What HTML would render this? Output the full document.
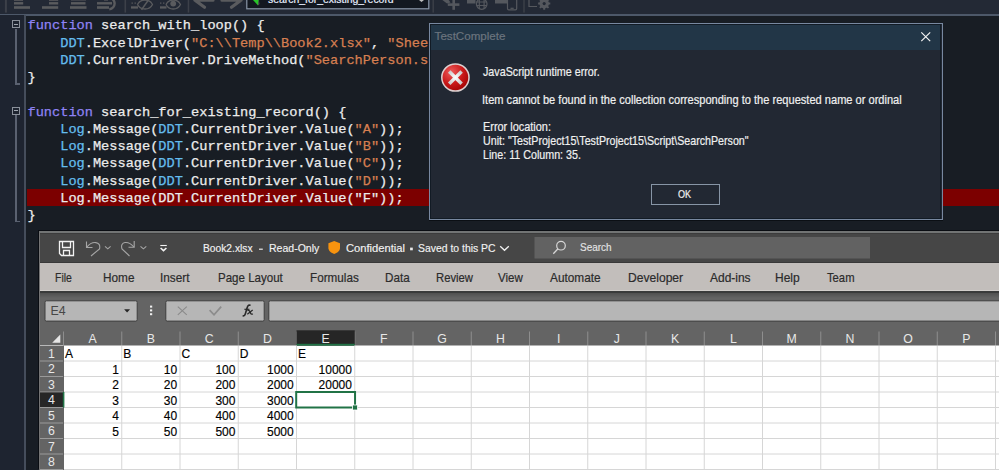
<!DOCTYPE html>
<html><head><meta charset="utf-8">
<style>
*{margin:0;padding:0;box-sizing:border-box}
html,body{width:999px;height:470px;overflow:hidden;background:#181d24;position:relative;font-family:"Liberation Sans",sans-serif}
.abs{position:absolute}
#tb{left:0;top:0;width:999px;height:14px;background:#232935}
#tbb{left:0;top:14px;width:999px;height:1.5px;background:#4d5869}
#gut{left:0;top:15px;width:24px;height:455px;background:#1e2430}
#gl{left:24px;top:15px;width:2px;height:455px;background:#454d5b}
.code{left:27.5px;font-family:"Liberation Mono",monospace;font-size:13.63px;line-height:17.27px;white-space:pre;color:#ececec;-webkit-text-stroke:0.25px currentColor}
.kw{color:#8f83f5}.ob{color:#64bdee}.st{color:#d67f51}
#red{left:27px;top:189px;width:972px;height:17px;background:#7c0000}

.fold{position:absolute;left:11.7px;width:8.3px;height:8px;border:1.3px solid #8a909a;}
.fold i{position:absolute;left:0.9px;top:2.4px;width:4px;height:1.4px;background:#a0a6b0}
.fv{position:absolute;left:15px;width:2px;background:#5a6170}
.fh{position:absolute;left:15px;width:5px;height:1.5px;background:#5a6170}
#dlg{left:429px;top:23px;width:514px;height:197.4px;border:1.4px solid #7888a0;background:#222833;box-shadow:0 1px 0 #0b0f14}
#dlgin{left:0;top:0;width:511.2px;height:194.6px;border:1px solid #121b25}
#dlgt{left:0;top:0;width:511.2px;height:25.6px;background:#223647}
.dt{font-family:"Liberation Sans",sans-serif;font-size:12.2px;line-height:14px;color:#f0f0f0;white-space:pre;position:absolute;transform-origin:0 0;-webkit-text-stroke:0.2px currentColor}
#okb{left:221px;top:160px;width:69px;height:21px;border:1.2px solid #8795a6}
#xl{left:39px;top:231px;width:960px;height:239px;background:#646464;border-top:2px solid #727474;border-left:1.3px solid #747474;box-shadow:-1px -1px 0 #0a0d12}
#xsh{left:39px;top:230px;width:960px;height:1px;background:#06090e}

#xtitle{left:40.2px;top:233px;width:959px;height:30px;background:#464646;border-top:1px solid #3c3c3c;border-bottom:1.2px solid #393939}
#xrib{left:40.2px;top:263px;width:959px;height:28px;background:#c2bebb;border-bottom:1.5px solid #d2cecb}
#xribl{left:40.2px;top:291px;width:959px;height:8px;background:linear-gradient(#3a3b3b 0,#3a3b3b 2px,#505050 2px,#646464 7px)}
.xt{position:absolute;font-size:11.6px;color:#f2f2f2;white-space:pre;transform-origin:0 0;-webkit-text-stroke:0.15px currentColor}
.tab{position:absolute;top:271px;font-size:12.4px;color:#2b2b2b;white-space:pre;transform-origin:0 0;-webkit-text-stroke:0.2px currentColor}

.ch{position:absolute;top:331.5px;width:40px;text-align:center;font-size:12.3px;color:#e8e8e8;line-height:14px}
.rh{position:absolute;left:40px;width:23px;text-align:center;font-size:12.3px;color:#e8e8e8;line-height:14px}
.cl,.cr{position:absolute;font-size:12px;color:#000;line-height:14px;white-space:pre;-webkit-text-stroke:0.15px currentColor}
.cr{text-align:right}
</style></head><body>
<div class="abs" id="tb"></div>
<div class="abs" id="tbb"></div>
<svg class="abs" style="left:0;top:0" width="999" height="15" viewBox="0 0 999 15">
<g fill="#5a5b5e">
<rect x="4.9" y="0" width="2" height="12.6" fill="#3c4049"/>
<rect x="14" y="-1" width="9" height="1.8"/><rect x="14" y="2.1" width="9.2" height="2.4"/><rect x="14" y="6.2" width="16" height="2.6"/>
<rect x="49" y="-1" width="9.2" height="1.8"/><rect x="49" y="2.1" width="9.2" height="2.4"/><rect x="42" y="6.2" width="16.2" height="2.6"/>
<rect x="71" y="-1" width="15" height="1.5"/><rect x="71" y="2.1" width="14.5" height="2.4"/><rect x="70" y="6.2" width="16.5" height="2.6"/>
<rect x="97" y="2.1" width="15" height="2.4"/><rect x="97" y="6.2" width="12" height="2.6"/>
<rect x="104" y="-1" width="4" height="1.6"/>
<rect x="124.5" y="0" width="1.6" height="12.6" fill="#3c4049"/>
<rect x="131.5" y="2.5" width="1.4" height="1.2"/><rect x="134.5" y="2.5" width="1.4" height="1.2"/><rect x="131" y="6.3" width="7" height="2.3"/>
<rect x="160" y="2.5" width="1.4" height="1.2"/><rect x="163" y="2.5" width="1.4" height="1.2"/><rect x="160" y="6.3" width="6.5" height="2.3"/>
<rect x="187.7" y="0" width="1.5" height="12.6" fill="#3c4049"/>
<circle cx="173.2" cy="3.6" r="2.9"/>
</g>
<g fill="none" stroke="#5a5b5e">
<path d="M108.5 -2.2A5.6 5.6 0 0 1 109.3 9.2" stroke-width="2.4"/>
<path d="M137.5 4.5C140.5 -1.5 149.5 -1.5 152.5 4.5C149.5 10.5 140.5 10.5 137.5 4.5" stroke-width="1.3"/>
<path d="M141.5 9.8L149.5 -1.5" stroke-width="1.5"/>
<path d="M166 4.5C169 -1.5 177.5 -1.5 180.5 4.5C177.5 10.5 169 10.5 166 4.5" stroke-width="1.3"/>
<path d="M195 0.2L204.5 7.2M195 0.2H213" stroke-width="3.2" stroke-linecap="round"/>
<path d="M241 0.2L231.5 7.2M222 0.2H241" stroke-width="3.2" stroke-linecap="round"/>
</g>
<rect x="246.8" y="-2" width="182" height="10.8" fill="#131820" stroke="#8a97a8" stroke-width="1.2"/>
<path d="M253 0L258 5.5L258.8 0Z" fill="#29c429"/>
<path d="M258.8 0L258 5.5L259.5 4Z" fill="#5a5a5a"/>
<path d="M419 0H424L421.5 2Z" fill="#c0c0c0"/>
<rect x="432.5" y="0" width="1.4" height="12.6" fill="#3c4049"/>
<g fill="#55585e">
<path d="M441 -1H448L450.5 2.5L447 3.5Z"/>
<rect x="452.4" y="-1" width="2.6" height="10.8"/><rect x="447.8" y="3.3" width="11.6" height="2.6"/>
<rect x="467" y="-1" width="8.5" height="4.5"/>
<rect x="495" y="-1" width="12" height="4.5"/>
<rect x="523.3" y="0" width="1.4" height="12.6" fill="#3c4049"/>
</g>
<g fill="none" stroke="#55585e" stroke-width="1.2">
<circle cx="481.7" cy="4" r="5.3"/>
<path d="M476.4 2H487M476.6 5.5H486.8M479.3 -1V9M484.1 -1V9"/>
<path d="M507.5 -1V8.5Q507.5 9.8 508.8 9.8H515.4Q516.7 9.8 516.7 8.5V-1"/>
<path d="M510.5 8.3H513.7"/>
<path d="M529 -1V6.5H537"/>
<circle cx="544.2" cy="3.6" r="3.6" stroke-width="2.4"/>
<path d="M544.2 -2.5V9.7M538.1 3.6H550.3M539.9 -0.7L548.5 7.9M548.5 -0.7L539.9 7.9" stroke-width="2"/>
</g>
<circle cx="544.2" cy="3.6" r="1.6" fill="#232935"/>
</svg>
<div class="abs" style="left:268px;top:-7.6px;font-size:11.8px;color:#e8f0ff;white-space:pre;transform:scaleX(0.883);transform-origin:0 0;-webkit-text-stroke:0.2px currentColor">search_for_existing_record</div>

<div class="abs" id="gut"></div>
<div class="abs" id="gl"></div>
<div class="abs" id="red"></div>
<div class="abs code" style="top:17.3px"><span class="kw">function</span> search_with_loop() {
    <span class="ob">DDT</span>.ExcelDriver(<span class="st">"C:\\Temp\\Book2.xlsx"</span>, <span class="st">"Sheet1"</span>, true);
    <span class="ob">DDT</span>.CurrentDriver.DriveMethod(<span class="st">"SearchPerson.search_for_existing_record"</span>);
}

<span class="kw">function</span> search_for_existing_record() {
    <span class="ob">Log</span>.Message(<span class="ob">DDT</span>.CurrentDriver.Value(<span class="st">"A"</span>));
    <span class="ob">Log</span>.Message(<span class="ob">DDT</span>.CurrentDriver.Value(<span class="st">"B"</span>));
    <span class="ob">Log</span>.Message(<span class="ob">DDT</span>.CurrentDriver.Value(<span class="st">"C"</span>));
    <span class="ob">Log</span>.Message(<span class="ob">DDT</span>.CurrentDriver.Value(<span class="st">"D"</span>));
    Log.Message(DDT.CurrentDriver.Value("F"));
}</div>

<div class="fold" style="top:20.2px"><i></i></div>
<div class="fv" style="top:28.5px;height:56px"></div>
<div class="fh" style="top:83px"></div>
<div class="fold" style="top:106.5px"><i></i></div>
<div class="fv" style="top:115px;height:107px"></div>
<div class="fh" style="top:220.5px"></div>

<div class="abs" id="dlg">
 <div class="abs" id="dlgt"></div>
 <div class="abs" id="okb"></div>
 <div class="abs" id="dlgin"></div>
</div>
<svg class="abs" style="left:920px;top:31px" width="12" height="12" viewBox="0 0 12 12"><path d="M1.3 1.3L10.2 10.2M10.2 1.3L1.3 10.2" stroke="#f2f2f2" stroke-width="1.2"/></svg>
<svg class="abs" style="left:440px;top:62px" width="31" height="31" viewBox="0 0 31 31">
 <defs><radialGradient id="rg" cx="0.35" cy="0.3" r="0.8"><stop offset="0" stop-color="#ee5a5a"/><stop offset="0.55" stop-color="#c81818"/><stop offset="1" stop-color="#9c0000"/></radialGradient>
 <radialGradient id="xg" cx="0.5" cy="0.5" r="0.6"><stop offset="0" stop-color="#ffffff"/><stop offset="1" stop-color="#cfcfcf"/></radialGradient></defs>
 <circle cx="15.4" cy="15.5" r="13.6" fill="url(#rg)" stroke="#ddd0d0" stroke-width="1.5"/>
 <path d="M9.2 9.4L21.6 21.7M21.6 9.4L9.2 21.7" stroke="url(#xg)" stroke-width="3.5"/>
</svg>
<div class="dt" style="left:434.6px;top:28.8px;font-size:11.6px;color:#6b747e;transform:scaleX(1.0)">TestComplete</div>
<div class="dt" style="left:483.1px;top:65.4px;transform:scaleX(0.8794)">JavaScript runtime error.</div>
<div class="dt" style="left:482.4px;top:92.6px;transform:scaleX(0.9084)">Item cannot be found in the collection corresponding to the requested name or ordinal</div>
<div class="dt" style="left:483.1px;top:119.9px;transform:scaleX(0.8956)">Error location:</div>
<div class="dt" style="left:483.2px;top:133.7px;transform:scaleX(0.8756)">Unit: "TestProject15\TestProject15\Script\SearchPerson"</div>
<div class="dt" style="left:483.1px;top:147.5px;transform:scaleX(0.8777)">Line: 11 Column: 35.</div>
<div class="dt" style="left:677.7px;top:187.3px;font-size:11.2px;transform:scaleX(0.81)">OK</div>
<div class="abs" id="xsh"></div>
<div class="abs" id="xl"></div>
<div class="abs" id="xtitle"></div>
<div class="abs" id="xrib"></div>
<div class="abs" id="xribl"></div>
<div class="tab" style="left:55.06px;transform:scaleX(0.8441)">File</div>
<div class="tab" style="left:102.65px;transform:scaleX(0.9515)">Home</div>
<div class="tab" style="left:160.05px;transform:scaleX(0.9494)">Insert</div>
<div class="tab" style="left:217.87px;transform:scaleX(0.9314)">Page Layout</div>
<div class="tab" style="left:309.66px;transform:scaleX(0.9437)">Formulas</div>
<div class="tab" style="left:384.56px;transform:scaleX(0.9414)">Data</div>
<div class="tab" style="left:435.59px;transform:scaleX(0.9098)">Review</div>
<div class="tab" style="left:498.2px;transform:scaleX(0.9294)">View</div>
<div class="tab" style="left:549.9px;transform:scaleX(0.954)">Automate</div>
<div class="tab" style="left:627.62px;transform:scaleX(0.9756)">Developer</div>
<div class="tab" style="left:709.6px;transform:scaleX(0.9661)">Add-ins</div>
<div class="tab" style="left:775.43px;transform:scaleX(0.9678)">Help</div>
<div class="tab" style="left:826.6px;transform:scaleX(0.9074)">Team</div>
<svg class="abs" style="left:0;top:0" width="999" height="470" viewBox="0 0 999 470">
<g fill="none" stroke="#f2f2f2" stroke-width="1.3">
<path d="M59.5 241.5H73.5V255.5H61.5L59.5 253.5Z"/>
<path d="M62.5 241.5V247.5H70.5V241.5"/>
<path d="M63.5 255.5V250.5H69.5V255.5"/>
</g>
<g fill="none" stroke="#a6a6a6" stroke-width="1.1">
<path d="M86.5 241.5V247.5H92.5"/>
<path d="M86.8 247.2C92 240.5 101.5 241 99.5 249L91 256"/>
<path d="M105 246.3L107.8 248.8L110.6 246.3"/>
<path d="M134.2 241V247.3H128.5"/>
<path d="M133.9 247C128.5 240.5 119.5 241 122 249L129.5 256"/>
<path d="M140.5 246.3L143.4 248.8L146.3 246.3"/>
</g>
<path d="M160.3 245.5H166.8" stroke="#f2f2f2" stroke-width="1.1"/>
<path d="M160.6 248L163.5 250.6L166.4 248" stroke="#f2f2f2" stroke-width="1.6" fill="none"/>
<path d="M259 249.2H262.8" stroke="#eaeaea" stroke-width="1.2"/>
<path d="M334.2 241L340 243.2V248C340 251 337 253 334.2 254C331.4 253 328.4 251 328.4 248V243.2Z" fill="#f7930f"/>
<rect x="410.1" y="247.6" width="2.7" height="2.7" fill="#eaeaea"/>
<path d="M500.2 246.2L504.5 250.3L508.8 246.2" stroke="#f2f2f2" stroke-width="1.3" fill="none"/>
<rect x="534.5" y="237" width="335.5" height="21.5" fill="#626262"/>
<circle cx="561" cy="245.7" r="4.3" fill="none" stroke="#d6d6d6" stroke-width="1.2"/>
<path d="M558 248.8L553.3 253.8" stroke="#d6d6d6" stroke-width="1.3"/>
</svg>
<div class="xt" style="left:202.6px;top:241px;transform:scaleX(0.8833)">Book2.xlsx</div>
<div class="xt" style="left:269px;top:241px;transform:scaleX(0.908)">Read-Only</div>
<div class="xt" style="left:345.6px;top:241px;transform:scaleX(0.9645)">Confidential</div>
<div class="xt" style="left:418.2px;top:241px;transform:scaleX(0.8979)">Saved to this PC</div>
<div class="xt" style="left:580.4px;top:241px;font-size:11.3px;color:#e4e4e4;transform:scaleX(0.8814)">Search</div>
<!--TITLE-->

<!--FBAR-->
<svg class="abs" style="left:0;top:0" width="999" height="470" viewBox="0 0 999 470">
<rect x="45" y="300.8" width="92.2" height="20.3" rx="1.5" fill="#b6b6b6" stroke="#3e3e3e" stroke-width="1"/>
<path d="M124.1 309.3H130.1L127.1 312.5Z" fill="#262626"/>
<rect x="150" y="305.6" width="2.2" height="2" fill="#f0f0f0"/>
<rect x="150" y="309.4" width="2.2" height="2" fill="#f0f0f0"/>
<rect x="150" y="313.2" width="2.2" height="2" fill="#f0f0f0"/>
<rect x="165.8" y="300.8" width="98.4" height="20.3" rx="1.5" fill="#b6b6b6" stroke="#3e3e3e" stroke-width="1"/>
<path d="M177.8 306.6L186.8 314.8M186.8 306.6L177.8 314.8" stroke="#8a8a8a" stroke-width="1.1"/>
<path d="M209.6 310.2L214 314.8L221.2 306.6" stroke="#8c8c8c" stroke-width="1.7" fill="none"/>
<rect x="268.8" y="300.8" width="740" height="20.3" rx="1.5" fill="#b6b6b6" stroke="#3e3e3e" stroke-width="1"/>
</svg>
<div class="abs" style="left:50.5px;top:303.5px;font-size:12.4px;color:#474747">E4</div>
<svg class="abs" style="left:0;top:0" width="999" height="470" viewBox="0 0 999 470"><g fill="none" stroke="#2a2a2a">
<path d="M242.6 315.6Q244.6 316.6 245.5 313.2L247.3 307.2Q248.3 304.3 250.6 305.4" stroke-width="1.6"/>
<path d="M244.4 309.3H249.4" stroke-width="1.2"/>
<path d="M247.5 310.6Q249 309.6 249.9 311.8L250.7 313.4Q251.5 314.8 252.8 313.8" stroke-width="1.3"/>
<path d="M252.7 310.1L247.3 314.3" stroke-width="1.3"/>
</g></svg>
<!--GRIDSTART-->
<svg class="abs" style="left:0;top:0" width="999" height="470" viewBox="0 0 999 470">
<rect x="64" y="345.5" width="935" height="125" fill="#ffffff"/>
<path d="M63.50 331.5V345.5" stroke="#8e8e8e" stroke-width="1"/>
<path d="M121.75 331.5V345.5" stroke="#8e8e8e" stroke-width="1"/>
<path d="M180.00 331.5V345.5" stroke="#8e8e8e" stroke-width="1"/>
<path d="M238.25 331.5V345.5" stroke="#8e8e8e" stroke-width="1"/>
<path d="M296.50 331.5V345.5" stroke="#8e8e8e" stroke-width="1"/>
<path d="M354.75 331.5V345.5" stroke="#8e8e8e" stroke-width="1"/>
<path d="M413.00 331.5V345.5" stroke="#8e8e8e" stroke-width="1"/>
<path d="M471.25 331.5V345.5" stroke="#8e8e8e" stroke-width="1"/>
<path d="M529.50 331.5V345.5" stroke="#8e8e8e" stroke-width="1"/>
<path d="M587.75 331.5V345.5" stroke="#8e8e8e" stroke-width="1"/>
<path d="M646.00 331.5V345.5" stroke="#8e8e8e" stroke-width="1"/>
<path d="M704.25 331.5V345.5" stroke="#8e8e8e" stroke-width="1"/>
<path d="M762.50 331.5V345.5" stroke="#8e8e8e" stroke-width="1"/>
<path d="M820.75 331.5V345.5" stroke="#8e8e8e" stroke-width="1"/>
<path d="M879.00 331.5V345.5" stroke="#8e8e8e" stroke-width="1"/>
<path d="M937.25 331.5V345.5" stroke="#8e8e8e" stroke-width="1"/>
<path d="M995.50 331.5V345.5" stroke="#8e8e8e" stroke-width="1"/>
<rect x="296.50" y="330.3" width="58.25" height="15.2" fill="#262626"/>
<rect x="296.50" y="343.8" width="58.25" height="1.8" fill="#217346"/>
<path d="M40 345.5H63.5" stroke="#b8b8b8" stroke-width="1"/>
<path d="M121.75 345.5V470" stroke="#d6d6d6" stroke-width="1"/>
<path d="M180.00 345.5V470" stroke="#d6d6d6" stroke-width="1"/>
<path d="M238.25 345.5V470" stroke="#d6d6d6" stroke-width="1"/>
<path d="M296.50 345.5V470" stroke="#d6d6d6" stroke-width="1"/>
<path d="M354.75 345.5V470" stroke="#d6d6d6" stroke-width="1"/>
<path d="M413.00 345.5V470" stroke="#d6d6d6" stroke-width="1"/>
<path d="M471.25 345.5V470" stroke="#d6d6d6" stroke-width="1"/>
<path d="M529.50 345.5V470" stroke="#d6d6d6" stroke-width="1"/>
<path d="M587.75 345.5V470" stroke="#d6d6d6" stroke-width="1"/>
<path d="M646.00 345.5V470" stroke="#d6d6d6" stroke-width="1"/>
<path d="M704.25 345.5V470" stroke="#d6d6d6" stroke-width="1"/>
<path d="M762.50 345.5V470" stroke="#d6d6d6" stroke-width="1"/>
<path d="M820.75 345.5V470" stroke="#d6d6d6" stroke-width="1"/>
<path d="M879.00 345.5V470" stroke="#d6d6d6" stroke-width="1"/>
<path d="M937.25 345.5V470" stroke="#d6d6d6" stroke-width="1"/>
<path d="M995.50 345.5V470" stroke="#d6d6d6" stroke-width="1"/>
<path d="M64 361.00H999" stroke="#d6d6d6" stroke-width="1"/>
<path d="M40 361.00H63" stroke="#9a9a9a" stroke-width="1"/>
<path d="M64 376.50H999" stroke="#d6d6d6" stroke-width="1"/>
<path d="M40 376.50H63" stroke="#9a9a9a" stroke-width="1"/>
<path d="M64 392.00H999" stroke="#d6d6d6" stroke-width="1"/>
<path d="M40 392.00H63" stroke="#9a9a9a" stroke-width="1"/>
<path d="M64 407.50H999" stroke="#d6d6d6" stroke-width="1"/>
<path d="M40 407.50H63" stroke="#9a9a9a" stroke-width="1"/>
<path d="M64 423.00H999" stroke="#d6d6d6" stroke-width="1"/>
<path d="M40 423.00H63" stroke="#9a9a9a" stroke-width="1"/>
<path d="M64 438.50H999" stroke="#d6d6d6" stroke-width="1"/>
<path d="M40 438.50H63" stroke="#9a9a9a" stroke-width="1"/>
<path d="M64 454.00H999" stroke="#d6d6d6" stroke-width="1"/>
<path d="M40 454.00H63" stroke="#9a9a9a" stroke-width="1"/>
<path d="M64 469.50H999" stroke="#d6d6d6" stroke-width="1"/>
<path d="M40 469.50H63" stroke="#9a9a9a" stroke-width="1"/>
<rect x="40" y="392.50" width="23" height="14.50" fill="#262626"/>
<rect x="62.8" y="392.00" width="1.6" height="15.50" fill="#217346"/>
<path d="M60.3 334.6V342.7H52.2Z" fill="#e6e6e6"/>
<rect x="296.20" y="392.00" width="58.85" height="15.50" fill="none" stroke="#217346" stroke-width="2"/>
<rect x="352.55" y="405.00" width="5" height="5" fill="#217346" stroke="#fff" stroke-width="0.8"/>
</svg>
<div class="ch" style="left:72.62px">A</div>
<div class="ch" style="left:130.88px">B</div>
<div class="ch" style="left:189.12px">C</div>
<div class="ch" style="left:247.38px">D</div>
<div class="ch" style="left:305.62px">E</div>
<div class="ch" style="left:363.88px">F</div>
<div class="ch" style="left:422.12px">G</div>
<div class="ch" style="left:480.38px">H</div>
<div class="ch" style="left:538.62px">I</div>
<div class="ch" style="left:596.88px">J</div>
<div class="ch" style="left:655.12px">K</div>
<div class="ch" style="left:713.38px">L</div>
<div class="ch" style="left:771.62px">M</div>
<div class="ch" style="left:829.88px">N</div>
<div class="ch" style="left:888.12px">O</div>
<div class="ch" style="left:946.38px">P</div>
<div class="rh" style="top:346.80px">1</div>
<div class="rh" style="top:362.30px">2</div>
<div class="rh" style="top:377.80px">3</div>
<div class="rh" style="top:393.30px">4</div>
<div class="rh" style="top:408.80px">5</div>
<div class="rh" style="top:424.30px">6</div>
<div class="rh" style="top:439.80px">7</div>
<div class="rh" style="top:455.30px">8</div>
<div class="cl" style="left:65.00px;top:347.30px">A</div>
<div class="cl" style="left:123.25px;top:347.30px">B</div>
<div class="cl" style="left:181.50px;top:347.30px">C</div>
<div class="cl" style="left:239.75px;top:347.30px">D</div>
<div class="cl" style="left:298.00px;top:347.30px">E</div>
<div class="cr" style="left:63.50px;top:362.80px;width:55.45px">1</div>
<div class="cr" style="left:121.75px;top:362.80px;width:55.45px">10</div>
<div class="cr" style="left:180.00px;top:362.80px;width:55.45px">100</div>
<div class="cr" style="left:238.25px;top:362.80px;width:55.45px">1000</div>
<div class="cr" style="left:296.50px;top:362.80px;width:55.45px">10000</div>
<div class="cr" style="left:63.50px;top:378.30px;width:55.45px">2</div>
<div class="cr" style="left:121.75px;top:378.30px;width:55.45px">20</div>
<div class="cr" style="left:180.00px;top:378.30px;width:55.45px">200</div>
<div class="cr" style="left:238.25px;top:378.30px;width:55.45px">2000</div>
<div class="cr" style="left:296.50px;top:378.30px;width:55.45px">20000</div>
<div class="cr" style="left:63.50px;top:393.80px;width:55.45px">3</div>
<div class="cr" style="left:121.75px;top:393.80px;width:55.45px">30</div>
<div class="cr" style="left:180.00px;top:393.80px;width:55.45px">300</div>
<div class="cr" style="left:238.25px;top:393.80px;width:55.45px">3000</div>
<div class="cr" style="left:63.50px;top:409.30px;width:55.45px">4</div>
<div class="cr" style="left:121.75px;top:409.30px;width:55.45px">40</div>
<div class="cr" style="left:180.00px;top:409.30px;width:55.45px">400</div>
<div class="cr" style="left:238.25px;top:409.30px;width:55.45px">4000</div>
<div class="cr" style="left:63.50px;top:424.80px;width:55.45px">5</div>
<div class="cr" style="left:121.75px;top:424.80px;width:55.45px">50</div>
<div class="cr" style="left:180.00px;top:424.80px;width:55.45px">500</div>
<div class="cr" style="left:238.25px;top:424.80px;width:55.45px">5000</div>
<!--GRID-->
</body></html>
